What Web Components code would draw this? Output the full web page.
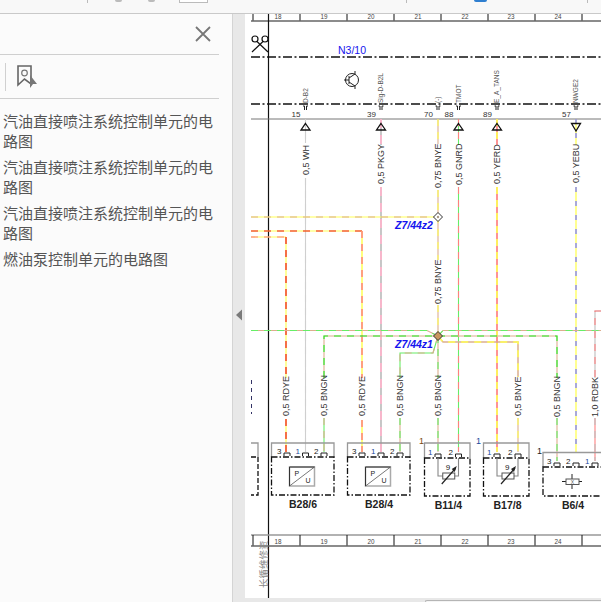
<!DOCTYPE html>
<html>
<head>
<meta charset="utf-8">
<title>电路图</title>
<style>
  html, body { margin: 0; height: 100%; overflow: hidden; background: #e8e8e8; }
  body { display: flex; flex-direction: column; width: 601px; height: 602px; }
</style>
</head>
<body>
<top-strip></top-strip>
<viewer-main>
  <bookmark-panel slot="panel">
    <bookmark-item>汽油直接喷注系统控制单元的电路图</bookmark-item>
    <bookmark-item>汽油直接喷注系统控制单元的电路图</bookmark-item>
    <bookmark-item>汽油直接喷注系统控制单元的电路图</bookmark-item>
    <bookmark-item>燃油泵控制单元的电路图</bookmark-item>
  </bookmark-panel>
  <circuit-page slot="page"></circuit-page>
</viewer-main>

<script>
class TopStrip extends HTMLElement {
    constructor() {
        super();
        this.attachShadow({ mode: 'open' });
        this.shadowRoot.innerHTML = `
            <style>
                :host { display: block; height: 14px; box-sizing: border-box; background: #f8f8f8; border-bottom: 1px solid #c9c9c9; flex: none; }
                .row { display: flex; height: 100%; }
                .sep { width: 1px; height: 3px; background: #bbb; margin-left: 87px; }
                .dot { width: 7px; height: 2px; background: #bbb; border-radius: 0 0 4px 4px; }
                .dot.a { margin-left: 27px; }
                .dot.b { margin-left: 26px; }
                .box { width: 29px; height: 3px; background: #fff; border: 1px solid #bbb; border-top: 0; box-sizing: border-box; margin-left: 24px; }
                .sep.c { margin-left: 198px; }
                .blue { width: 13px; height: 2px; background: #2f7fd0; border-radius: 0 0 7px 7px; margin-left: 67px; }
                .sep.d { margin-left: 100px; }
            </style>
            <div class="row">
                <div class="sep"></div><div class="dot a"></div><div class="dot b"></div><div class="box"></div>
                <div class="sep c"></div><div class="blue"></div><div class="sep d"></div>
            </div>`;
    }
}

class ViewerMain extends HTMLElement {
    constructor() {
        super();
        this.attachShadow({ mode: 'open' });
        this.shadowRoot.innerHTML = `
            <style>
                :host { display: flex; flex: 1; min-height: 0; }
                .gutter { width: 13px; flex: none; background: #e8e8e8; border-left: 1px solid #d4d4d4; box-sizing: border-box; position: relative; }
                .gutter svg { position: absolute; left: 2px; top: 295px; }
            </style>
            <slot name="panel"></slot>
            <div class="gutter"><svg width="8" height="12" viewBox="0 0 8 12"><path d="M7 0.5V11.5L1 6Z" fill="#7a7a7a"/></svg></div>
            <slot name="page"></slot>`;
    }
}

class BookmarkPanel extends HTMLElement {
    constructor() {
        super();
        this.attachShadow({ mode: 'open' });
        this.shadowRoot.innerHTML = `
            <style>
                :host { display: block; width: 232px; flex: none; background: #fbfbfb; box-sizing: border-box; padding-right: 13px; }
                .head { height: 41px; border-bottom: 1px solid #cfcfcf; display: flex; justify-content: flex-end; align-items: center; padding-right: 7px; box-sizing: border-box; }
                .tools { height: 44px; border-bottom: 1px solid #cfcfcf; display: flex; align-items: center; padding-left: 5px; gap: 11px; box-sizing: border-box; }
                .bar { width: 1px; height: 28px; background: #d0d0d0; }
                .list { display: flex; flex-direction: column; gap: 6px; padding: 12px 0 0 3px; }
            </style>
            <div class="head">
                <svg width="18" height="18" viewBox="0 0 18 18"><path d="M2 2L16 16M16 2L2 16" stroke="#777" stroke-width="1.8" fill="none"/></svg>
            </div>
            <div class="tools">
                <div class="bar"></div>
                <svg width="21" height="24" viewBox="0 0 21 24">
                    <path d="M1 1H14V19L7.500 14L1 20Z" fill="none" stroke="#666" stroke-width="1.6"/>
                    <circle cx="7.500" cy="8" r="2.800" fill="none" stroke="#777" stroke-width="1.200"/>
                    <path d="M13 10L20 19H16L13 23Z" fill="#777"/>
                </svg>
            </div>
            <div class="list"><slot></slot></div>`;
    }
}

class BookmarkItem extends HTMLElement {
    constructor() {
        super();
        this.attachShadow({ mode: 'open' });
        this.shadowRoot.innerHTML = `
            <style>
                :host { display: block; font: 15px/20px "Noto Sans CJK SC", "Liberation Sans", sans-serif; color: #555; width: 214px; }
            </style>
            <slot></slot>`;
    }
}

class CircuitPage extends HTMLElement {
    constructor() {
        super();
        this.attachShadow({ mode: 'open' });
    }

    connectedCallback() {
        this.render();
    }

    // two colour wire: base line with a dashed second colour on top
    wire(pts, c1, c2, w, dash) {
        const p = pts.map(a => a.join(',')).join(' ');
        const sw = w || 1.1;
        return `<polyline points="${p}" fill="none" stroke="${c1}" stroke-width="${sw}"/>` +
            `<polyline points="${p}" fill="none" stroke="${c2}" stroke-width="${sw}" stroke-dasharray="${dash || '7 6'}"/>`;
    }

    vert(x, spans, c1, c2, w, dash) {
        return spans.map(s => this.wire([[x, s[0]], [x, s[1]]], c1, c2, w, dash)).join('');
    }

    // rotated text reading upward, y is the lower end
    upText(x, y, txt, cls) {
        return `<text class="${cls}" transform="translate(${x} ${y}) rotate(-90)">${txt}</text>`;
    }

    ruler(y, lineTop, lineBottom) {
        const ticks = [253, 300, 347, 394, 441, 488, 535, 582];
        const nums = [[278, 18], [324, 19], [371, 20], [418, 21], [465, 22], [511, 23], [558, 24]];
        let s = '';
        if (lineTop) s += `<line x1="251" x2="601" y1="${y}" y2="${y}" stroke="#999" stroke-width="1.500"/>`;
        s += ticks.map(x => `<line x1="${x}" x2="${x}" y1="${y}" y2="${lineBottom}" stroke="#111" stroke-width="1"/>`).join('');
        s += nums.map(n => `<text class="ruler" x="${n[0]}" y="${lineBottom - 2.500}" text-anchor="middle">${n[1]}</text>`).join('');
        s += `<line x1="251" x2="601" y1="${lineBottom}" y2="${lineBottom}" stroke="#666" stroke-width="1.500"/>`;
        return s;
    }

    pinTop(x, label, num) {
        return `<text class="pin" transform="translate(${x + 2.300} 103) rotate(-90)">${label}</text>` +
            `<path d="M${x - 2.500} 106H${x - 1}V110M${x + 2.500} 106H${x + 1}V110" fill="none" stroke="#222" stroke-width="1"/>` +
            `<text class="num" x="${x - 5}" y="117" text-anchor="end">${num}</text>`;
    }

    triangle(x, down) {
        const d = down
            ? `M${x - 4.500} 123.500H${x + 4.500}L${x} 131Z`
            : `M${x} 123.500L${x + 4.500} 130H${x - 4.500}Z`;
        return `<path d="${d}" fill="none" stroke="#111" stroke-width="1.300"/>`;
    }

    plug(x, y) {
        return `<path d="M${x - 3} ${y + 4}V${y + 1}H${x + 3}V${y + 4}" fill="none" stroke="#222" stroke-width="1"/>`;
    }

    connector(x1, x2, top, dash, bottom, pins) {
        let s = `<path d="M${x1} ${dash}V${top}H${x2}V${dash}" fill="none" stroke="#999" stroke-width="1.300"/>`;
        s += `<rect x="${x1}" y="${dash}" width="${x2 - x1}" height="${bottom - dash}" fill="none" stroke="#111" stroke-width="1.300" stroke-dasharray="6 2 1.500 2"/>`;
        s += pins.map(p =>
            this.plug(p[0], dash - 5) +
            `<text class="cnum" x="${p[0] - 5.500}" y="${dash - 3.500}" text-anchor="end" fill="${p[2] || '#222'}">${p[1]}</text>`).join('');
        return s;
    }

    pressure(x, y) {
        return `<rect x="${x}" y="${y}" width="25" height="19" fill="#fff" stroke="#aaa" stroke-width="1.500"/>` +
            `<path d="M${x} ${y + 19}V${y}H${x + 25}" fill="none" stroke="#333" stroke-width="1"/>` +
            `<line x1="${x}" y1="${y + 19}" x2="${x + 25}" y2="${y}" stroke="#555" stroke-width="0.800"/>` +
            `<text class="sym" x="${x + 5}" y="${y + 9}">P</text><text class="sym" x="${x + 16}" y="${y + 16}">U</text>`;
    }

    thermo(x1, x2) {
        const c = (x1 + x2) / 2 + 0.5;
        return `<path d="M${x1} 458V476H${c - 6}M${x2} 458V476H${c + 6}" fill="none" stroke="#888" stroke-width="1.100"/>` +
            `<rect x="${c - 6}" y="473" width="12" height="6" fill="#fff" stroke="#555" stroke-width="1"/>` +
            `<path d="M${c - 7} 484L${c + 7} 468" stroke="#222" stroke-width="1.200"/><path d="M${c + 8} 466L${c + 3} 469L${c + 6} 472Z" fill="#222"/>` +
            `<text class="cnum" x="${c - 3}" y="470" fill="#222">9</text>`;
    }

    render() {
        const BN = '#dcae8e', YE = '#ffff55', GN = '#66ee66', RD = '#ff8080', RR = '#ee1111', PK = '#ffb4cc', GY = '#bdbdbd', BU = '#7a7aff';
        let w = '';
        // wires to the upper connector
        w += this.vert(305.5, [[119, 143], [178, 452]], '#cfcfcf', '#cfcfcf');
        w += this.vert(381, [[119, 145], [187, 452]], GY, PK, 1.7, '9 7');
        w += this.vert(438, [[119, 144], [190, 260]], BN, YE);
        w += this.vert(438, [[305, 336]], BN, YE);
        w += this.vert(458.5, [[119, 145], [187, 452]], GN, RD);
        w += this.vert(497, [[119, 145], [187, 452]], RD, YE, 1.7);
        w += this.vert(576, [[119, 145], [187, 452]], YE, BU, 1.3, '5 9');
        // Z7/44z2 bus
        w += this.wire([[251, 217], [438, 217]], YE, BN, 1.2);
        // red yellow runs
        w += this.wire([[251, 231], [362, 231]], YE, RR, 1.2);
        w += this.vert(362, [[231, 378], [420, 452]], YE, RD, 1.5);
        w += this.wire([[251, 237], [286, 237]], YE, RD, 1.2);
        w += this.vert(286, [[237, 378], [419, 452]], YE, RR, 1.2);
        // Z7/44z1 bus
        w += this.wire([[251, 330.5], [427, 330.5], [438, 336]], BN, GN);
        w += this.wire([[438, 336], [443, 330.5], [601, 330.5]], BN, GN);
        w += this.wire([[324, 378], [324, 336], [557, 336], [557, 378]], BN, '#22ee22');
        w += this.wire([[438, 336], [443, 342], [518, 342], [518, 377]], BN, YE, 1.5);
        w += this.wire([[438, 336], [433, 353], [400, 353], [400, 378]], GN, BN);
        w += this.vert(438, [[336, 378], [418, 452]], BN, GN);
        w += this.vert(324, [[418, 452]], GN, BN);
        w += this.vert(400, [[418, 452]], BN, GN);
        w += this.vert(518, [[418, 452]], BN, YE);
        w += this.vert(557, [[418, 461]], BN, GN);
        w += this.wire([[601, 311], [595, 311], [595, 378]], GY, RD);
        w += this.vert(595, [[418, 461]], RD, GY);
        w += `<line x1="251.500" x2="251.500" y1="380" y2="414" stroke="#336" stroke-width="1" stroke-dasharray="4 4"/>`;

        let t = '';
        [[305.5, 175, '0,5 WH'], [381, 184, '0,5 PKGY'], [438, 188, '0,75 BNYE'], [458.5, 185, '0,5 GNRD'], [497, 184, '0,5 YERD'], [576, 183, '0,5 YEBU'],
         [438, 304, '0,75 BNYE'],
         [286, 416, '0,5 RDYE'], [324, 416, '0,5 BNGN'], [362, 416, '0,5 RDYE'], [400, 416, '0,5 BNGN'], [438, 416, '0,5 BNGN'], [518, 416, '0,5 BNYE'], [557, 417, '0,5 BNGN'], [595, 417, '1,0 RDBK']
        ].forEach(a => {
            t += this.upText(a[0] + 3.2, a[1], a[2], 'wl');
        });

        const pins = this.pinTop(305.5, 'D-B2', 15) + this.pinTop(381, 'Sig-D-B2L', 39) + this.pinTop(438, '(-)', 70) +
            this.pinTop(458.5, 'TMOT', 88) + this.pinTop(497, 'E_A_TANS', 89) + this.pinTop(576, 'NWGE2', 57);
        const tris = [305.5, 381, 458.5, 497].map(x => this.triangle(x)).join('') + this.triangle(576, true);

        const comps =
            `<path d="M251 443H258V457" fill="none" stroke="#999" stroke-width="1.300"/>` +
            `<path d="M251 457H258V495H251" fill="none" stroke="#111" stroke-width="1.300" stroke-dasharray="5 2"/>` +
            this.connector(271.5, 334, 443, 457, 495, [[287, 3], [305.5, 1, '#1b4a9c'], [324, 2]]) + this.pressure(289.5, 467) +
            this.connector(347.5, 410, 443, 457, 495, [[362, 3], [381, 1, '#1b4a9c'], [400, 2]]) + this.pressure(365.5, 467) +
            this.connector(424.5, 470, 443, 458, 496, [[438, 1, '#1b4a9c'], [458.5, 2]]) + this.thermo(438, 458.5) +
            this.connector(483.5, 529, 443, 458, 496, [[497, 1, '#1b4a9c'], [518, 2]]) + this.thermo(497, 518) +
            this.connector(543, 620, 452.5, 467, 496, [[557, 3], [576, 2], [595, 1, '#1b4a9c']]) +
            `<path d="M562 481.500H582M572 474V489" stroke="#222" stroke-width="1"/><rect x="566" y="479" width="13" height="5.500" fill="#fff" stroke="#555" stroke-width="1"/><text class="tiny" x="572.500" y="484" text-anchor="middle">X</text>` +
            `<text class="one" x="419" y="444" fill="#7a4a12">1</text><text class="one" x="476" y="444" fill="#1b4a9c">1</text><text class="one" x="537" y="454" fill="#222">1</text>` +
            `<text class="part" x="303" y="508" text-anchor="middle">B28/6</text>` +
            `<text class="part" x="379" y="508" text-anchor="middle">B28/4</text>` +
            `<text class="part" x="448.500" y="509" text-anchor="middle">B11/4</text>` +
            `<text class="part" x="507.500" y="509" text-anchor="middle">B17/8</text>` +
            `<text class="part" x="573" y="509" text-anchor="middle">B6/4</text>`;

        const junctions =
            `<path d="M438 212.500L442.500 217L438 221.500L433.500 217Z" fill="#fff" stroke="#333" stroke-width="1"/><circle cx="438" cy="217" r="1.200" fill="#a98"/>` +
            `<path d="M438 331.500L442.500 336L438 340.500L433.500 336Z" fill="#c9955f" stroke="#333" stroke-width="1"/>`;

        const scissors =
            `<g fill="none" stroke="#111" stroke-width="1.200"><circle cx="255" cy="39" r="3"/><circle cx="265" cy="39" r="3"/><path d="M257 41.500L268 52M263 41.500L252 52"/></g>`;
        const transistor =
            `<g fill="none" stroke="#222" stroke-width="1"><circle cx="352" cy="80" r="6.500"/><path d="M344 80H349M349 76V84M349 78L355 74V71M349 82L355 86V89"/></g>`;

        this.shadowRoot.innerHTML = `
            <style>
                :host { display: flex; flex-direction: column; flex: 1; background: #e8e8e8; min-width: 0; }
                svg { display: block; background: #fff; flex: none; }
                .thumb { height: 2px; margin: 2px 0 0 180px; background: #f4f4f4; border-top: 1px solid #b5b5b5; border-left: 1px solid #b5b5b5; border-radius: 2px 0 0 0; box-sizing: border-box; }
                text { font-family: "Liberation Sans", sans-serif; }
                .ruler { font-size: 6.300px; fill: #444; }
                .pin { font-size: 6.500px; fill: #555; }
                .num { font-size: 8px; fill: #333; }
                .wl { font-size: 9px; fill: #333; }
                .bl { font-size: 10.500px; fill: #1414ee; }
                .bi { font-size: 10.500px; fill: #1414ee; font-weight: bold; font-style: italic; }
                .cnum { font-size: 8px; }
                .one { font-size: 9px; }
                .sym { font-size: 7px; fill: #222; }
                .tiny { font-size: 5px; fill: #555; }
                .part { font-size: 10.500px; fill: #222; font-weight: bold; }
                .cjk { font: 9.500px "Noto Sans CJK SC", sans-serif; fill: #888; }
            </style>
            <svg width="356" height="584" viewBox="245 14 356 584">
                ${this.ruler(14, false, 21)}
                <line x1="268.500" x2="268.500" y1="14" y2="598" stroke="#111" stroke-width="1.200"/>
                ${scissors}
                <text class="bl" x="338" y="54">N3/10</text>
                <line x1="251" x2="601" y1="57" y2="57" stroke="#111" stroke-width="1.300" stroke-dasharray="9 2.500 2 2.500"/>
                ${transistor}
                <line x1="251" x2="601" y1="104" y2="104" stroke="#111" stroke-width="1.300" stroke-dasharray="9 2.500 2 2.500"/>
                <line x1="251" x2="601" y1="119" y2="119" stroke="#777" stroke-width="1"/>
                ${w}
                ${pins}
                ${tris}
                ${t}
                ${junctions}
                <text class="bi" x="395" y="229">Z7/44z2</text>
                <text class="bi" x="395" y="348">Z7/44z1</text>
                ${comps}
                ${this.ruler(535, true, 546)}
                <text class="cjk" transform="translate(267 588) rotate(-90)">长循维修资</text>
            </svg>
            <div class="thumb"></div>`;
    }
}

customElements.define('top-strip', TopStrip);
customElements.define('viewer-main', ViewerMain);
customElements.define('bookmark-panel', BookmarkPanel);
customElements.define('bookmark-item', BookmarkItem);
customElements.define('circuit-page', CircuitPage);
</script>
</body>
</html>
